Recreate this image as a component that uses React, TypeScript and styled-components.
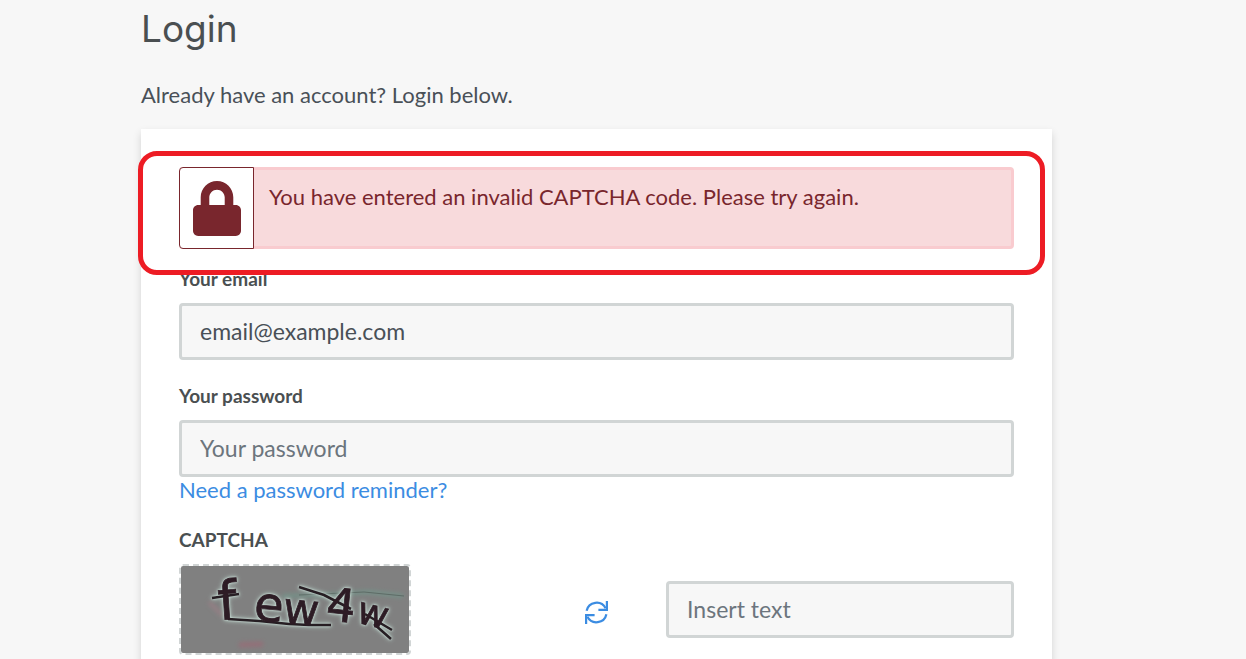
import React from "react";
import styled, { createGlobalStyle } from "styled-components";

const GlobalStyle = createGlobalStyle`
  *, *::before, *::after { box-sizing: border-box; }
  body {
    margin: 0;
    background: #f7f7f7;
    color: #495057;
    font-family: Lato, "Liberation Sans", sans-serif;
    font-size: 22px;
    line-height: 34px;
  }
`;

const Page = styled.main`
  padding: 8px 194px 38px 141px;
`;

const Title = styled.h1`
  margin: 0 0 28px;
  font-family: Inter, Roboto, sans-serif;
  font-size: 37px;
  font-weight: 400;
  line-height: 42px;
  color: #4a4f51;
`;

const Intro = styled.p`
  margin: 0 0 17px;
`;

const Card = styled.form`
  display: flex;
  flex-direction: column;
  padding: 38px;
  background: #fff;
  box-shadow: 0 4px 8px rgba(0, 0, 0, 0.15);
`;

const AlertArea = styled.div`
  position: relative;
`;

const Alert = styled.div`
  display: flex;
  min-height: 82px;
  background: #f8dadc;
  border: 3px solid #f9cbcf;
  border-radius: 4px;
  color: #79262d;
`;

const AlertIcon = styled.span`
  display: flex;
  align-items: center;
  justify-content: center;
  width: 75px;
  margin: -3px 0 -3px -3px;
  background: #fff;
  border: 1px solid #79262d;
  border-radius: 4px 0 0 4px;
`;

const AlertText = styled.p`
  flex: 1;
  margin: 0;
  padding: 10px 15px;
`;

const Highlight = styled.div`
  position: absolute;
  inset: -16px -31px -26px -41px;
  border: 5px solid #ed1c24;
  border-radius: 19px;
  pointer-events: none;
`;

const Field = styled.div<{ $gap: number }>`
  display: flex;
  flex-direction: column;
  align-items: flex-start;
  margin-top: ${(p) => p.$gap}px;
`;

const Label = styled.label`
  margin-bottom: 11px;
  font-size: 19px;
  font-weight: 700;
  line-height: 26px;
  color: #4a4f51;
`;

const Input = styled.input`
  width: 100%;
  height: 57px;
  padding: 0 18px 2px;
  background: #f7f7f7;
  border: 3px solid #d1d5d5;
  border-radius: 4px;
  color: #495057;
  font: inherit;
  font-size: 23px;
  outline: none;

  &::placeholder {
    color: #6c757d;
    opacity: 1;
  }
`;

const ReminderLink = styled.a`
  margin: -4px 0 1px;
  color: #3b8ce2;
  text-decoration: none;
`;

const CaptchaRow = styled.div`
  display: grid;
  grid-template-columns: 5fr 2fr 5fr;
  align-items: center;
  width: 100%;
`;

const CaptchaFrame = styled.div`
  width: 232px;
  height: 91px;
  background: #808080;
  background-clip: padding-box;
  border: 2px dashed #d1d5d5;
  border-radius: 4px;

  svg { display: block; }
`;

const CaptchaInk = styled.g`
  filter: blur(0.4px) drop-shadow(0 0 1px #d6e8e1) drop-shadow(0 0 2px #b4cdc4);
`;

const RefreshButton = styled.button`
  justify-self: center;
  display: flex;
  margin: 5px 0 0;
  padding: 0;
  border: 0;
  background: none;
  color: #3b8ce2;
  cursor: pointer;
`;

function LockIcon() {
  return (
    <svg width="48" height="55" viewBox="0 0 448 512" fill="currentColor" aria-hidden="true">
      <path d="M400 224h-24v-72C376 68.2 307.8 0 224 0S72 68.2 72 152v72H48c-26.5 0-48 21.5-48 48v192c0 26.5 21.5 48 48 48h352c26.5 0 48-21.5 48-48V272c0-26.5-21.5-48-48-48zm-104 0H152v-72c0-39.7 32.3-72 72-72s72 32.3 72 72v72z" />
    </svg>
  );
}

function RefreshIcon() {
  return (
    <svg width="23" height="23" viewBox="0 0 23 23" fill="none" stroke="currentColor" strokeWidth="2.2" aria-hidden="true">
      <path d="M1.6 9.8A10.2 10.2 0 0 1 20.6 7.2" />
      <path d="M21.9 0V8.9H13.4" />
      <path d="M21.4 13.2A10.2 10.2 0 0 1 2.4 15.8" />
      <path d="M1.1 23V14.1H9.6" />
    </svg>
  );
}

function CaptchaImage() {
  return (
    <svg width="228" height="87" viewBox="2 2 228 87" role="img" aria-label="CAPTCHA image">
      <defs>
        <filter id="smudge" x="-20%" y="-200%" width="140%" height="500%">
          <feGaussianBlur stdDeviation="2" />
        </filter>
      </defs>
      <g filter="url(#smudge)" fill="none" opacity="0.7">
        <path d="M103 32L145 31L189 28L224 32" stroke="#6f9a8c" strokeWidth="4" />
        <path d="M60 81L84 80" stroke="#9d6875" strokeWidth="5" />
        <path d="M30 38L44 52" stroke="#9d7f86" strokeWidth="4" />
      </g>
      <path d="M120 31L185 28L225 32" fill="none" stroke="#5d6b66" strokeWidth="1" />
      <CaptchaInk>
        <path
          d="M33 34L60 30M49 55L80 57L110 60L130 61L152 61M120 23L145 31L172 45M186 50L213 66M195 60L212 75"
          fill="none"
          stroke="#261e23"
          strokeWidth="2.6"
        />
        <text fontFamily="DejaVu Sans, sans-serif" fill="#2d1c25" stroke="#2d1c25" strokeWidth="0.8">
          <tspan x="40" y="56" rotate="-4" fontSize="54">f</tspan>
          <tspan x="74" y="56" rotate="5" fontSize="48">e</tspan>
          <tspan x="103" y="59" rotate="5" fontSize="44">w</tspan>
          <tspan x="146" y="56" rotate="6" fontSize="46">4</tspan>
          <tspan x="176" y="58" rotate="14" fontSize="38">w</tspan>
        </text>
      </CaptchaInk>
    </svg>
  );
}

export default function App() {
  return (
    <>
      <GlobalStyle />
      <Page>
        <Title>Login</Title>
        <Intro>Already have an account? Login below.</Intro>
        <Card onSubmit={(e) => e.preventDefault()}>
          <AlertArea>
            <Alert role="alert">
              <AlertIcon><LockIcon /></AlertIcon>
              <AlertText>You have entered an invalid CAPTCHA code. Please try again.</AlertText>
            </Alert>
            <Highlight />
          </AlertArea>
          <Field $gap={17}>
            <Label htmlFor="email">Your email</Label>
            <Input id="email" type="email" defaultValue="email@example.com" />
          </Field>
          <Field $gap={23}>
            <Label htmlFor="password">Your password</Label>
            <Input id="password" type="password" placeholder="Your password" />
            <ReminderLink href="#reminder">Need a password reminder?</ReminderLink>
          </Field>
          <Field $gap={19}>
            <Label htmlFor="captcha">CAPTCHA</Label>
            <CaptchaRow>
              <CaptchaFrame><CaptchaImage /></CaptchaFrame>
              <RefreshButton type="button" aria-label="Refresh CAPTCHA"><RefreshIcon /></RefreshButton>
              <Input id="captcha" type="text" placeholder="Insert text" />
            </CaptchaRow>
          </Field>
        </Card>
      </Page>
    </>
  );
}
